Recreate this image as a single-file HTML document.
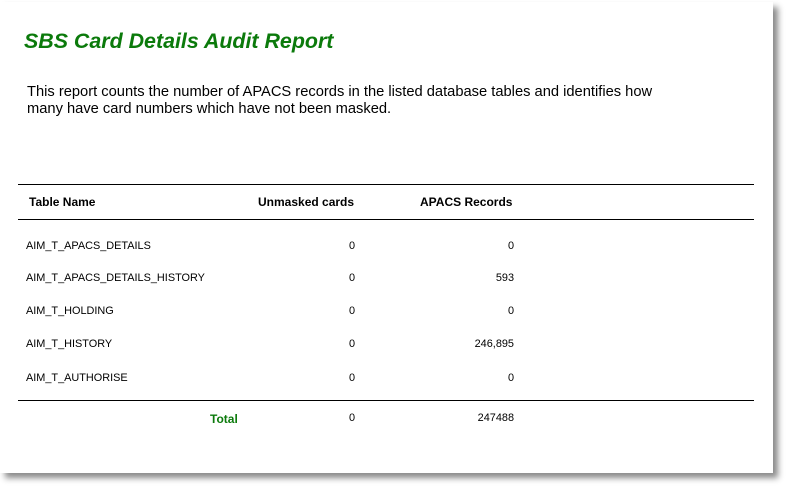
<!DOCTYPE html>
<html><head><style>
body{margin:0;width:787px;height:487px;background:#fff;position:relative;overflow:hidden;font-family:"Liberation Sans",Arial,sans-serif}
.page{position:absolute;left:0;top:2px;width:773px;height:471px;background:#fff;box-shadow:5px 5px 6px #8a8a8a}
.t{position:absolute;white-space:nowrap}
.h{left:24px;top:29px;font-size:21.4px;font-weight:bold;font-style:italic;color:#0b7a0b}
.p{left:27px;top:84px;font-size:14.7px;line-height:17px;color:#000}
.line{position:absolute;left:18px;width:736px;height:1px;background:#000}
.b{font-size:12px;font-weight:bold}
.r{font-size:10.9px}
.ra{text-align:right}
</style></head><body>
<div class="page"></div>
<div class="t h">SBS Card Details Audit Report</div>
<div class="t p">This report counts the number of APACS records in the listed database tables and identifies how<br>many have card numbers which have not been masked.</div>
<div class="line" style="top:184px"></div>
<div class="line" style="top:219px"></div>
<div class="line" style="top:400px"></div>
<div class="t b" style="left:29px;top:195px">Table Name</div>
<div class="t b" style="left:258px;top:195px">Unmasked cards</div>
<div class="t b" style="left:420px;top:195px">APACS Records</div>

<div class="t r" style="left:26px;top:240px">AIM_T_APACS_DETAILS</div>
<div class="t r ra" style="right:432px;top:240px">0</div>
<div class="t r ra" style="right:273px;top:240px">0</div>

<div class="t r" style="left:26px;top:272px">AIM_T_APACS_DETAILS_HISTORY</div>
<div class="t r ra" style="right:432px;top:272px">0</div>
<div class="t r ra" style="right:273px;top:272px">593</div>

<div class="t r" style="left:26px;top:305px">AIM_T_HOLDING</div>
<div class="t r ra" style="right:432px;top:305px">0</div>
<div class="t r ra" style="right:273px;top:305px">0</div>

<div class="t r" style="left:26px;top:338px">AIM_T_HISTORY</div>
<div class="t r ra" style="right:432px;top:338px">0</div>
<div class="t r ra" style="right:273px;top:338px">246,895</div>

<div class="t r" style="left:26px;top:372px">AIM_T_AUTHORISE</div>
<div class="t r ra" style="right:432px;top:372px">0</div>
<div class="t r ra" style="right:273px;top:372px">0</div>

<div class="t b" style="left:210px;top:412px;color:#0b7a0b">Total</div>
<div class="t r ra" style="right:432px;top:412px">0</div>
<div class="t r ra" style="right:273px;top:412px">247488</div>
</body></html>
